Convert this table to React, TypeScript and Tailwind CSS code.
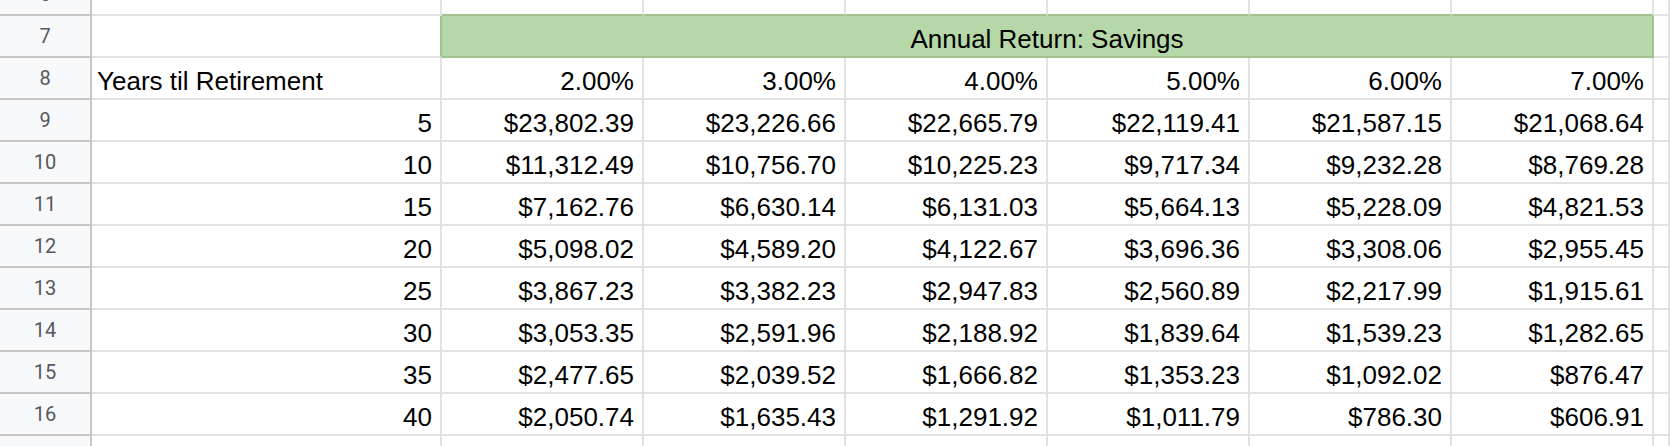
const rates = ['2.00%', '3.00%', '4.00%', '5.00%', '6.00%', '7.00%']

const rows: [number, string[]][] = [
  [5, ['$23,802.39', '$23,226.66', '$22,665.79', '$22,119.41', '$21,587.15', '$21,068.64']],
  [10, ['$11,312.49', '$10,756.70', '$10,225.23', '$9,717.34', '$9,232.28', '$8,769.28']],
  [15, ['$7,162.76', '$6,630.14', '$6,131.03', '$5,664.13', '$5,228.09', '$4,821.53']],
  [20, ['$5,098.02', '$4,589.20', '$4,122.67', '$3,696.36', '$3,308.06', '$2,955.45']],
  [25, ['$3,867.23', '$3,382.23', '$2,947.83', '$2,560.89', '$2,217.99', '$1,915.61']],
  [30, ['$3,053.35', '$2,591.96', '$2,188.92', '$1,839.64', '$1,539.23', '$1,282.65']],
  [35, ['$2,477.65', '$2,039.52', '$1,666.82', '$1,353.23', '$1,092.02', '$876.47']],
  [40, ['$2,050.74', '$1,635.43', '$1,291.92', '$1,011.79', '$786.30', '$606.91']],
]

function RowNum({ n }: { n: number }) {
  return (
    <div className="flex items-center justify-center bg-[#f8f9fa] border-r-2 border-b-2 border-[#c7c7c7] text-[20px] text-[#55585c] font-['Roboto',sans-serif]">
      {n}
    </div>
  )
}

function Cell({ children, align = 'right', className = '' }: { children?: React.ReactNode; align?: 'left' | 'right'; className?: string }) {
  return (
    <div
      className={
        'flex items-end overflow-hidden whitespace-nowrap border-r-2 border-b-2 border-[#e2e2e2] pb-[4px] leading-none ' +
        (align === 'right' ? 'justify-end pr-[8px] ' : 'justify-start pl-[5px] ') +
        className
      }
    >
      {children}
    </div>
  )
}

export default function App() {
  return (
    <div className="h-[446px] w-[1670px] overflow-hidden bg-white">
      <div className="-mt-[26px] grid grid-cols-[92px_350px_repeat(6,202px)_1fr] auto-rows-[42px] text-[26px] text-black font-['Liberation_Sans',Arial,sans-serif]">
        {/* row 6 */}
        <RowNum n={6} />
        <Cell />
        {rates.map((r) => (
          <Cell key={r} className="border-b-[#9fc492]" />
        ))}
        <Cell />

        {/* row 7 */}
        <RowNum n={7} />
        <Cell className="border-r-[#9fc492]" />
        <div className="col-span-6 flex items-end justify-center bg-[#b6d7a8] border-r-2 border-b-2 border-[#9fc492] pb-[4px] leading-none">
          Annual Return: Savings
        </div>
        <Cell />

        {/* row 8 */}
        <RowNum n={8} />
        <Cell align="left">Years til Retirement</Cell>
        {rates.map((r) => (
          <Cell key={r}>{r}</Cell>
        ))}
        <Cell />

        {rows.map(([years, vals], i) => (
          <div key={years} className="contents">
            <RowNum n={9 + i} />
            <Cell>{years}</Cell>
            {vals.map((v, j) => (
              <Cell key={j}>{v}</Cell>
            ))}
            <Cell />
          </div>
        ))}

        {/* row 17 */}
        <RowNum n={17} />
        <Cell />
        {rates.map((r) => (
          <Cell key={r} />
        ))}
        <Cell />
      </div>
    </div>
  )
}
